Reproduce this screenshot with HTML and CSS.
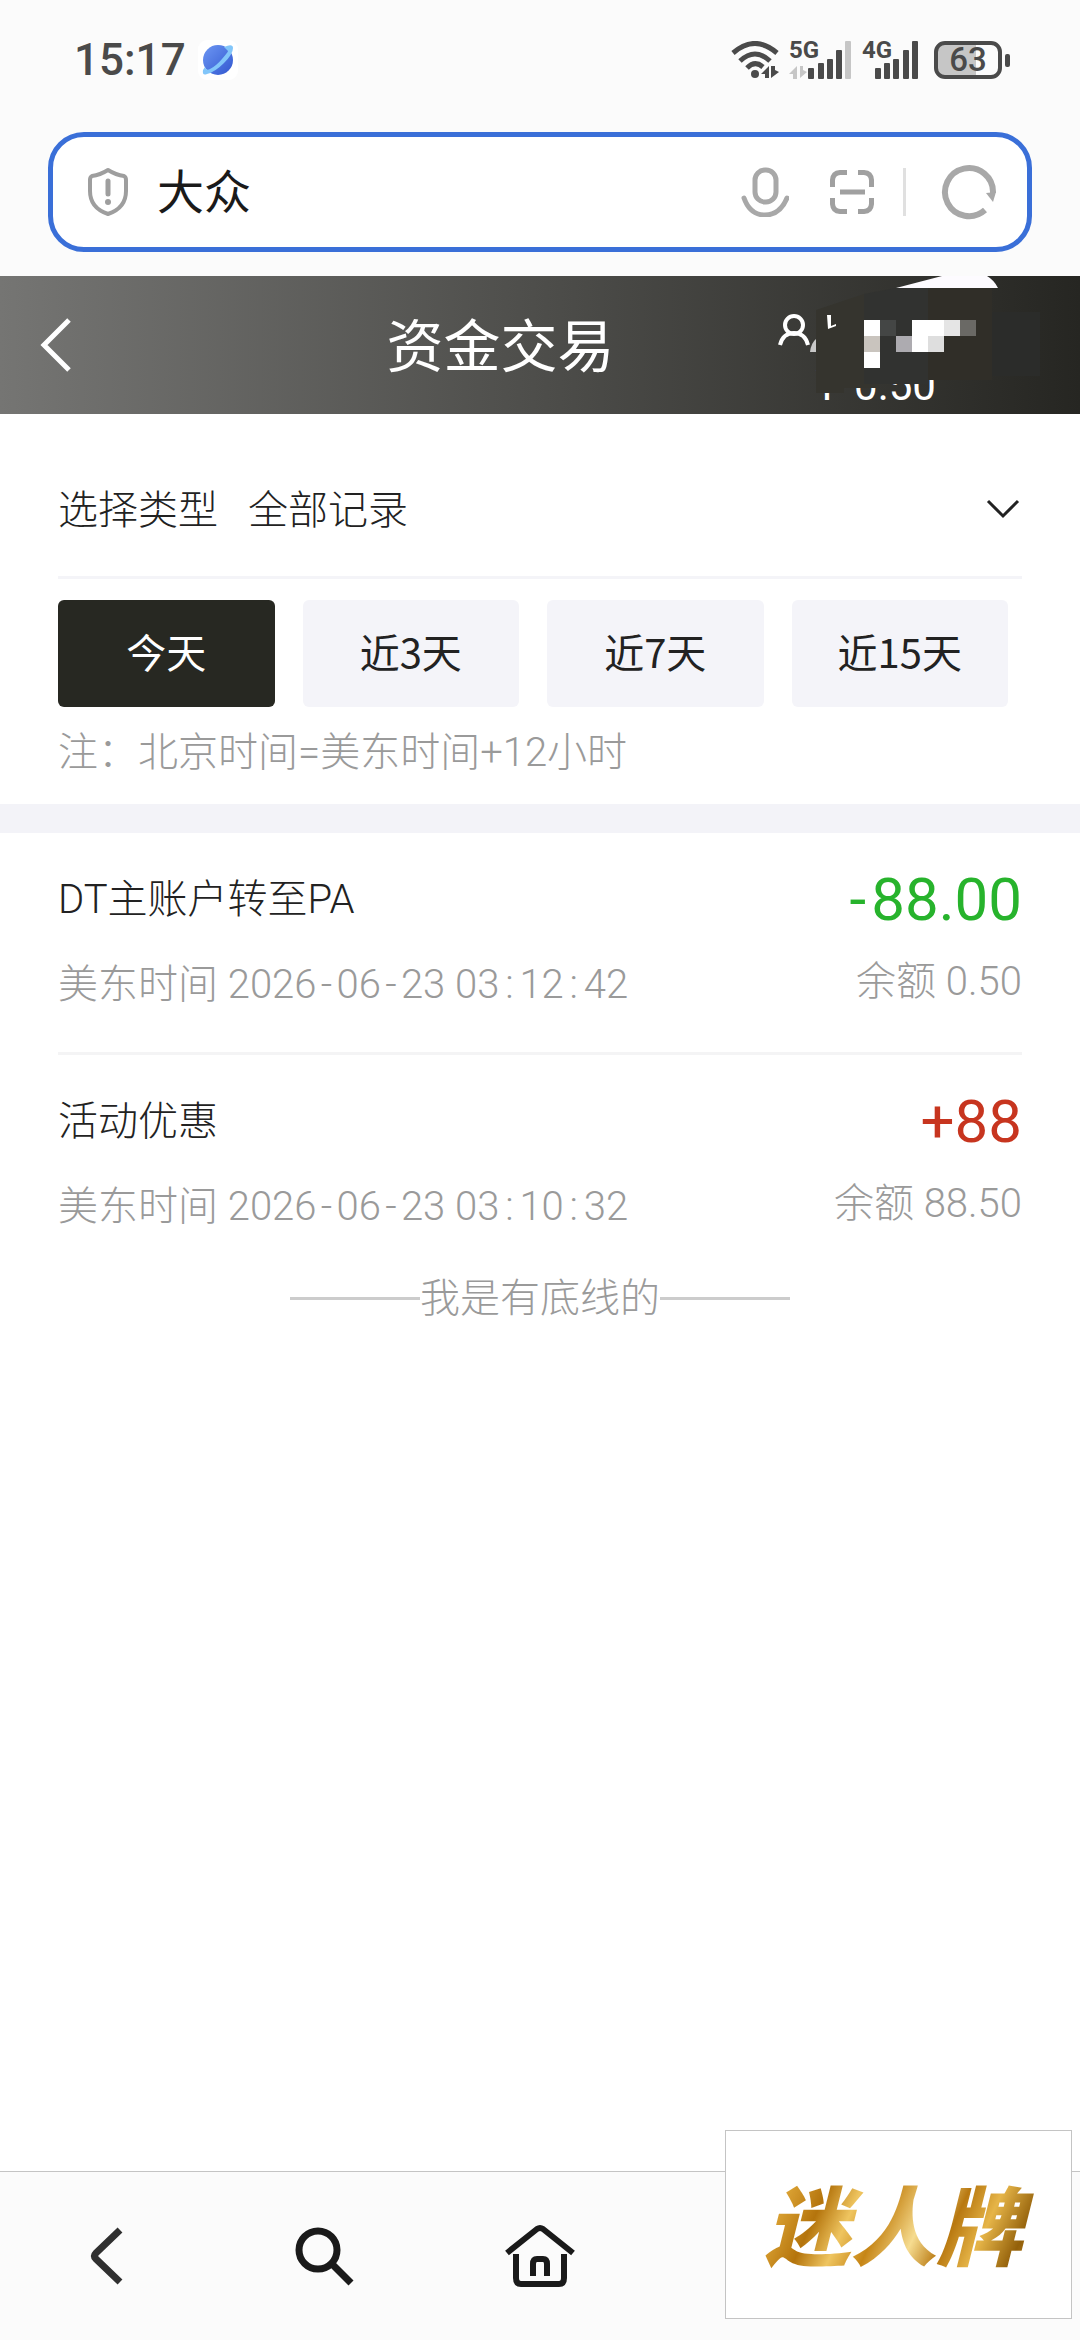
FILE: index.html
```html
<!DOCTYPE html>
<html lang="zh-CN">
<head>
<meta charset="utf-8">
<meta name="viewport" content="width=device-width, initial-scale=1">
<title>资金交易</title>
<link rel="stylesheet" href="styles.css">
</head>
<body>
<header class="browser">
  <div class="status">
    <div class="status-left">
      <time class="clock">15:17</time>
      <svg class="planet" width="40" height="40" viewBox="0 0 40 40" aria-hidden="true">
        <defs><linearGradient id="sky" x1="0" y1="0" x2="1" y2="1"><stop offset="0" stop-color="#6d97f3"/><stop offset="1" stop-color="#3157d0"/></linearGradient></defs>
        <rect width="40" height="40" rx="9" fill="#fff"/>
        <circle cx="20" cy="20" r="15" fill="url(#sky)"/>
        <path d="M26 7Q35 3 35 8Q35 14 26 23T9 34Q4 36 5 30L7 27Q8 31 12 29Q18 26 24 19T30 11Z" fill="#82c6fa"/>
      </svg>
    </div>
    <div class="status-right">
      <svg width="48" height="38" viewBox="0 0 48 38" aria-hidden="true">
        <g fill="none" stroke="#4a4a4a" stroke-width="5"><path d="M2 12Q24-7 46 12"/><path d="M9 20Q24 6 39 20"/><path d="M16 27Q24 19 32 26"/></g>
        <circle cx="24" cy="33" r="4" fill="#4a4a4a"/>
        <path d="M30 33l8-8v12h-4v-4zM48 31l-8 6V25h4v4z" fill="#4a4a4a"/>
      </svg>
      <div class="signal">
        <span class="net">5G</span>
        <svg width="63" height="38" viewBox="0 0 63 38" aria-hidden="true">
          <path d="M0 33l8-8v13H4v-5zM18 31l-7 6V25h3v4z" fill="#c6c6c6"/>
          <g fill="#4a4a4a"><rect x="19" y="27" width="6" height="11" rx="1"/><rect x="29" y="22" width="6" height="16" rx="1"/><rect x="38" y="18" width="6" height="20" rx="1"/><rect x="47" y="9" width="6" height="29" rx="1"/></g>
          <rect x="56" y="0" width="6" height="38" rx="1" fill="#c6c6c6"/>
        </svg>
      </div>
      <div class="signal">
        <span class="net">4G</span>
        <svg width="57" height="38" viewBox="0 0 57 38" aria-hidden="true">
          <g fill="#4a4a4a"><rect x="13" y="27" width="6" height="11" rx="1"/><rect x="22" y="22" width="6" height="16" rx="1"/><rect x="31" y="18" width="6" height="20" rx="1"/><rect x="41" y="9" width="6" height="29" rx="1"/><rect x="50" y="0" width="6" height="38" rx="1"/></g>
        </svg>
      </div>
      <div class="battery"><span class="level">63</span><span class="tip"></span></div>
    </div>
  </div>
  <form class="search">
    <svg width="42" height="50" viewBox="0 0 42 50" fill="none" stroke="#9e9e9e" stroke-width="4" stroke-linejoin="round" stroke-linecap="round" aria-hidden="true">
      <path d="M21 3Q29 8 37 9Q39 10 39 13V24Q39 41 21 47Q3 41 3 24V13Q3 10 5 9Q13 8 21 3Z"/>
      <path d="M21 14V27" stroke-width="5"/><circle cx="21" cy="35" r="3" fill="#9e9e9e" stroke="none"/>
    </svg>
    <input class="query" type="text" value="大众" aria-label="搜索">
    <button class="tool" type="button" aria-label="语音">
      <svg width="48" height="50" viewBox="0 0 48 50" fill="none" stroke="#a8a8a8" stroke-width="5"><rect x="14" y="3" width="21" height="32" rx="10"/><path d="M3 31Q9 48 24 48T46 31" stroke-linecap="round"/></svg>
    </button>
    <button class="tool scan" type="button" aria-label="扫码">
      <svg width="44" height="44" viewBox="0 0 44 44" fill="none" stroke="#a0a0a0" stroke-width="5"><path d="M2.500 17V10Q3 3 10 2.500H17M28 2.500H34Q41 3 41.500 10V17M41.500 28V34Q41 41 34 41.500H28M17 41.500H10Q3 41 2.500 34V28M10 22H35"/></svg>
    </button>
    <span class="bar"></span>
    <button class="tool" type="button" aria-label="刷新">
      <svg width="56" height="56" viewBox="0 0 56 56" fill="none" stroke="#a8a8a8" stroke-width="6"><path d="M44 46A24 24 0 1 1 52 29"/><path d="M45 29L55 28 52 38Z" fill="#a8a8a8" stroke="none"/></svg>
    </button>
  </form>
</header>

<div class="titlebar">
  <button class="back" type="button" aria-label="返回">
    <svg width="32" height="54" viewBox="0 0 32 54" fill="none" stroke="#fff" stroke-width="5"><path d="M29 2L4 27 29 52"/></svg>
  </button>
  <h1 class="title">资金交易</h1>
  <div class="account">
    <span class="balance"><span>¥</span><span>0.50</span></span>
    <svg class="mosaic" viewBox="770 276 310 138" aria-hidden="true">
      <path d="M896 288L942 276H987Q994 280 998 288Z" fill="#fdfbff"/>
      <path d="M816 310L864 294V384H879V388H844V393H816Z" fill="#35342e"/>
      <path d="M864 294L896 288H928V384H864Z" fill="#313230"/>
      <path d="M928 288H992V380H928Z" fill="#302e28"/>
      <path d="M992 312H1040V376H992Z" fill="#2b2c2a"/>
      <g fill="none" stroke="#fff" stroke-width="4"><circle cx="794" cy="325" r="9"/><path d="M780 345Q783 333 794 333T808 345"/></g>
      <path d="M810 352Q811 343 816 339V352Z" fill="#c8c8c8"/>
      <path d="M827 315H831V326L836 324V326L828 329Z" fill="#fff"/>
      <path d="M864 320h16v16h-16zM864 352h16v16h-16zM912 320h32v16h-32zM912 336h16v16h-16z" fill="#fff"/>
      <path d="M880 320h16v16h-16z" fill="#444645"/><path d="M864 336h16v16h-16z" fill="#c9c4be"/>
      <path d="M896 336h16v16h-16z" fill="#adabb0"/><path d="M928 336h16v16h-16z" fill="#dedede"/>
      <path d="M944 320h16v16h-16z" fill="#e5e5e5"/><path d="M960 320h16v16h-16z" fill="#6a6965"/>
    </svg>
  </div>
</div>

<main class="content">
  <section class="filter">
    <div class="type">
      <label for="type">选择类型</label>
      <select id="type"><option>全部记录</option></select>
      <svg class="arrow" width="34" height="20" viewBox="0 0 34 20" fill="none" stroke="#222" stroke-width="3" aria-hidden="true"><path d="M2 2L17 17 32 2"/></svg>
    </div>
    <div class="days">
      <button class="day active" type="button">今天</button>
      <button class="day" type="button">近3天</button>
      <button class="day" type="button">近7天</button>
      <button class="day" type="button">近15天</button>
    </div>
    <p class="note">注：北京时间=美东时间+12小时</p>
  </section>
  <ul class="records">
    <li class="record">
      <div class="info">
        <span class="name">DT主账户转至PA</span>
        <span class="muted">美东时间 2026<i class="sep">-</i>06<i class="sep">-</i>23 03<i class="sep">:</i>12<i class="sep">:</i>42</span>
      </div>
      <div class="sums">
        <span class="amount out"><i class="sep">-</i>88.00</span>
        <span class="muted">余额 0.50</span>
      </div>
    </li>
    <li class="record">
      <div class="info">
        <span class="name">活动优惠</span>
        <span class="muted">美东时间 2026<i class="sep">-</i>06<i class="sep">-</i>23 03<i class="sep">:</i>10<i class="sep">:</i>32</span>
      </div>
      <div class="sums">
        <span class="amount in">+88</span>
        <span class="muted">余额 88.50</span>
      </div>
    </li>
  </ul>
  <p class="end">我是有底线的</p>
</main>

<nav class="dock">
  <button class="dock-item" type="button" aria-label="后退">
    <svg width="70" height="64" viewBox="0 0 70 64" fill="none" stroke="#303030" stroke-width="7" stroke-linejoin="round"><path d="M47 6L23 29Q20 32 23 35L47 58"/></svg>
  </button>
  <button class="dock-item" type="button" aria-label="搜索">
    <svg width="70" height="64" viewBox="0 0 70 64" fill="none" stroke="#1a1a1a" stroke-width="7"><circle cx="29" cy="26" r="19"/><path d="M43 40L62 59"/></svg>
  </button>
  <button class="dock-item" type="button" aria-label="主页">
    <svg width="70" height="64" viewBox="0 0 70 64" fill="none" stroke="#1a1a1a" stroke-width="6" stroke-linejoin="round"><path d="M2 29L32 5Q35 3 38 5L68 29"/><path d="M11 30V54Q11 60 16 60H54Q59 60 59 54V30"/><path d="M28 52V40Q28 35 32 35H38Q42 35 42 40V52"/></svg>
  </button>
</nav>
<aside class="brand"><span class="brand-name">迷人牌</span></aside>
</body>
</html>
```
FILE: styles.css
```css
* { box-sizing: border-box; }

body {
  margin: 0;
  min-height: 100vh;
  display: flex;
  flex-direction: column;
  background: #fff;
  color: #222;
  font: 300 40px/60px "Noto Sans CJK SC", sans-serif;
}

button, input, select {
  margin: 0;
  padding: 0;
  border: 0;
  background: none;
  color: inherit;
  font: inherit;
}

svg { display: block; flex: none; }
h1, p, ul { margin: 0; padding: 0; list-style: none; }

/* Status bar and address field */
.browser { padding-bottom: 24px; background: #fbfbfb; }

.status {
  display: flex;
  justify-content: space-between;
  align-items: center;
  height: 132px;
  padding: 0 70px 12px 74px;
  color: #4a4a4a;
}

.status-left { display: flex; align-items: center; gap: 12px; }
.clock { font: 500 44px/60px Roboto, sans-serif; }
.status-right { display: flex; align-items: center; gap: 10px; }
.signal { position: relative; }

.net {
  position: absolute;
  left: 0;
  top: -3px;
  font: 700 24px/24px Roboto, sans-serif;
}

.battery { display: flex; align-items: center; gap: 3px; margin-left: 5px; }

.level {
  width: 68px;
  border: 4px solid #4a4a4a;
  border-radius: 11px;
  background: linear-gradient(90deg, #c6c6c6 63%, #fbfbfb 63%);
  font: 500 33px/30px Roboto, sans-serif;
  text-align: center;
}

.tip { width: 5px; height: 13px; border-radius: 2px; background: #4a4a4a; }

.search {
  display: flex;
  align-items: center;
  height: 120px;
  margin: 0 48px;
  padding: 0 30px 0 34px;
  border: 5px solid #3a6fd8;
  border-radius: 36px;
  background: #fff;
}

.query {
  flex: 1;
  min-width: 0;
  margin-left: 28px;
  padding-bottom: 6px;
  color: #1a1a1a;
  font-size: 47px;
  font-weight: 400;
}

.scan { margin-left: 41px; }
.bar { width: 3px; height: 48px; margin: 0 35px 0 29px; background: #e0e0e0; }

/* Page header */
.titlebar {
  display: grid;
  grid-template-columns: 231px 1fr 310px;
  align-items: center;
  height: 138px;
  background: linear-gradient(90deg, #757573, #262622);
  color: #fff;
}

.back { padding-left: 40px; justify-self: start; }
.title { padding-bottom: 6px; font-size: 57px; font-weight: 400; text-align: center; }
.account { position: relative; align-self: stretch; padding: 86px 0 0 46px; }
.balance { display: flex; gap: 16px; font: 400 42px/48px Roboto, sans-serif; }
.mosaic { position: absolute; inset: 0; width: 100%; height: 100%; }

/* Filters */
.content { flex: 1; }
.filter { padding: 24px 58px 21px; border-bottom: 29px solid #f3f3f8; }

.type {
  display: flex;
  align-items: center;
  gap: 30px;
  height: 141px;
  border-bottom: 3px solid #f4f4f8;
}

.type select { flex: 1; appearance: none; }
.arrow { margin: 4px 2px 0 0; }

.days {
  display: grid;
  grid-template-columns: repeat(4, 1fr);
  gap: 28px;
  margin-top: 21px;
  padding-right: 14px;
}

.day {
  height: 107px;
  padding-bottom: 6px;
  border-radius: 6px;
  background: #f4f4f9;
  font-weight: 400;
}

.day.active { background: #272822; color: #fff; }

.note, .records { font-family: Roboto, "Noto Sans CJK SC", sans-serif; }
.note { margin-top: 16px; color: #9a9a9a; }

/* Transactions */
.record {
  display: flex;
  justify-content: space-between;
  margin: 0 58px;
  padding: 37px 0 37px;
  border-bottom: 3px solid #f4f4f5;
}

.record:last-child { padding-bottom: 28px; border-bottom: 0; }
.info, .sums { display: flex; flex-direction: column; gap: 25px; }
.sums { align-items: flex-end; gap: 22px; }
.muted { color: #9a9a9a; }

.sep {
  display: inline-block;
  width: 20px;
  font-style: normal;
  text-align: center;
}

.amount { font-size: 60px; font-weight: 400; }
.amount .sep { width: 27px; }
.out { color: #27b32c; }
.in { color: #c7351f; }

.end {
  display: flex;
  justify-content: center;
  align-items: center;
  color: #9a9a9a;
}

.end::before, .end::after {
  content: "";
  width: 130px;
  height: 3px;
  margin-top: 6px;
  background: #ccc;
}

/* Browser toolbar */
.dock {
  display: grid;
  grid-template-columns: repeat(5, 1fr);
  height: 169px;
  border-top: 1px solid #c4c4c4;
  background: #fbfbfb;
}

.dock-item { display: grid; place-items: center; }

.brand {
  position: fixed;
  right: 8px;
  bottom: 21px;
  display: grid;
  place-items: center;
  width: 347px;
  height: 189px;
  border: 1px solid #c4c4c4;
  background: #fff;
}

.brand-name {
  padding: 0 16px 6px 6px;
  background: linear-gradient(115deg, #a86a08, #dca334 12%, #b4740c 24%, #efc560 34%, #c68516 44%, #f6dc90 56%, #b87810 66%, #e6b548 76%, #93600a 88%, #d39a2a);
  background-clip: text;
  color: transparent;
  font-size: 86px;
  font-weight: 900;
  font-style: italic;
  line-height: 120px;
}
```
